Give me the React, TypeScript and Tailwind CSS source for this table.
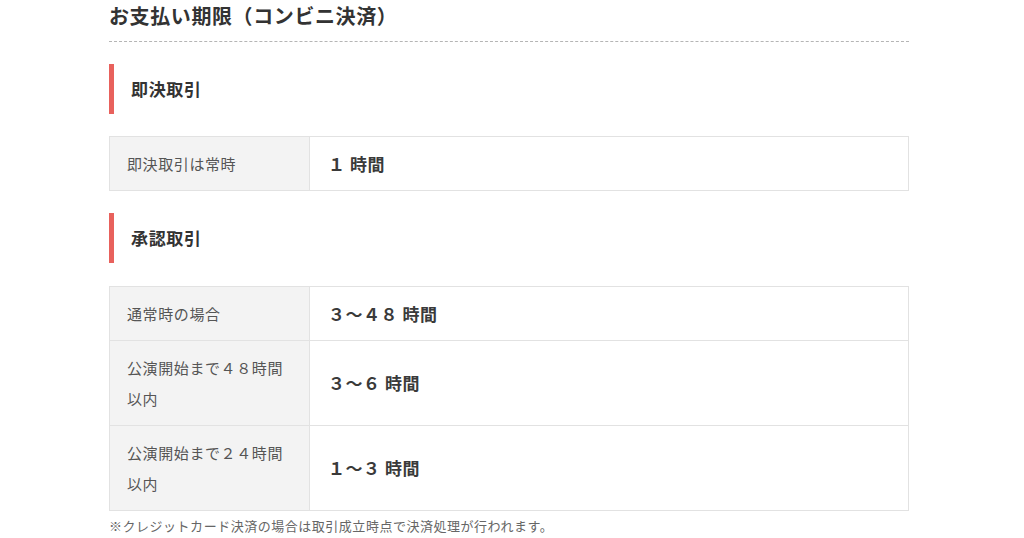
import React from "react";

const font = { fontFamily: '"Noto Sans CJK JP", "Noto Sans", sans-serif' };

const Heading = ({ children }: { children: React.ReactNode }) => (
  <div className="flex items-center h-[50px] border-l-[5px] border-[#e8615c] pl-[17px]">
    <h3 className="text-[17px] font-bold tracking-[0.04em] text-[#333]">{children}</h3>
  </div>
);

const Row = ({ label, value, last }: { label: React.ReactNode; value: string; last?: boolean }) => (
  <div className={`flex ${last ? "" : "border-b border-[#e2e2e2]"}`}>
    <div className="w-[200px] shrink-0 bg-[#f3f3f3] border-r border-[#e2e2e2] pl-[17px] pr-[12px] py-[11px] text-[15px] leading-[31px] tracking-[0.04em] text-[#555]">
      {label}
    </div>
    <div className="flex items-center pl-[18px] text-[17px] font-bold tracking-[0.03em] text-[#3a3a3a]">{value}</div>
  </div>
);

const App = () => {
  return (
    <div className="w-[1024px] h-[538px] bg-white overflow-hidden" style={font}>
      <div className="ml-[109px] w-[800px]">
        <div className="pt-px pb-[11px] border-b border-dashed border-[#b5b5b5]">
          <h2 className="text-[20px] leading-[29px] font-bold tracking-[0.03em] text-[#333]">お支払い期限（コンビニ決済）</h2>
        </div>

        <div className="mt-[22px]">
          <Heading>即決取引</Heading>
        </div>
        <div className="mt-[22px] border border-[#e2e2e2]">
          <Row label="即決取引は常時" value="１ 時間" last />
        </div>

        <div className="mt-[22px]">
          <Heading>承認取引</Heading>
        </div>
        <div className="mt-[23px] border border-[#e2e2e2]">
          <Row label="通常時の場合" value="３～４８ 時間" />
          <Row
            label={
              <>
                公演開始まで４８時間
                <br />
                以内
              </>
            }
            value="３～６ 時間"
          />
          <Row
            label={
              <>
                公演開始まで２４時間
                <br />
                以内
              </>
            }
            value="１～３ 時間"
            last
          />
        </div>

        <p className="mt-[5px] text-[13px] leading-[20px] tracking-[0.04em] text-[#666]">
          ※クレジットカード決済の場合は取引成立時点で決済処理が行われます。
        </p>
      </div>
    </div>
  );
};

export default App;
